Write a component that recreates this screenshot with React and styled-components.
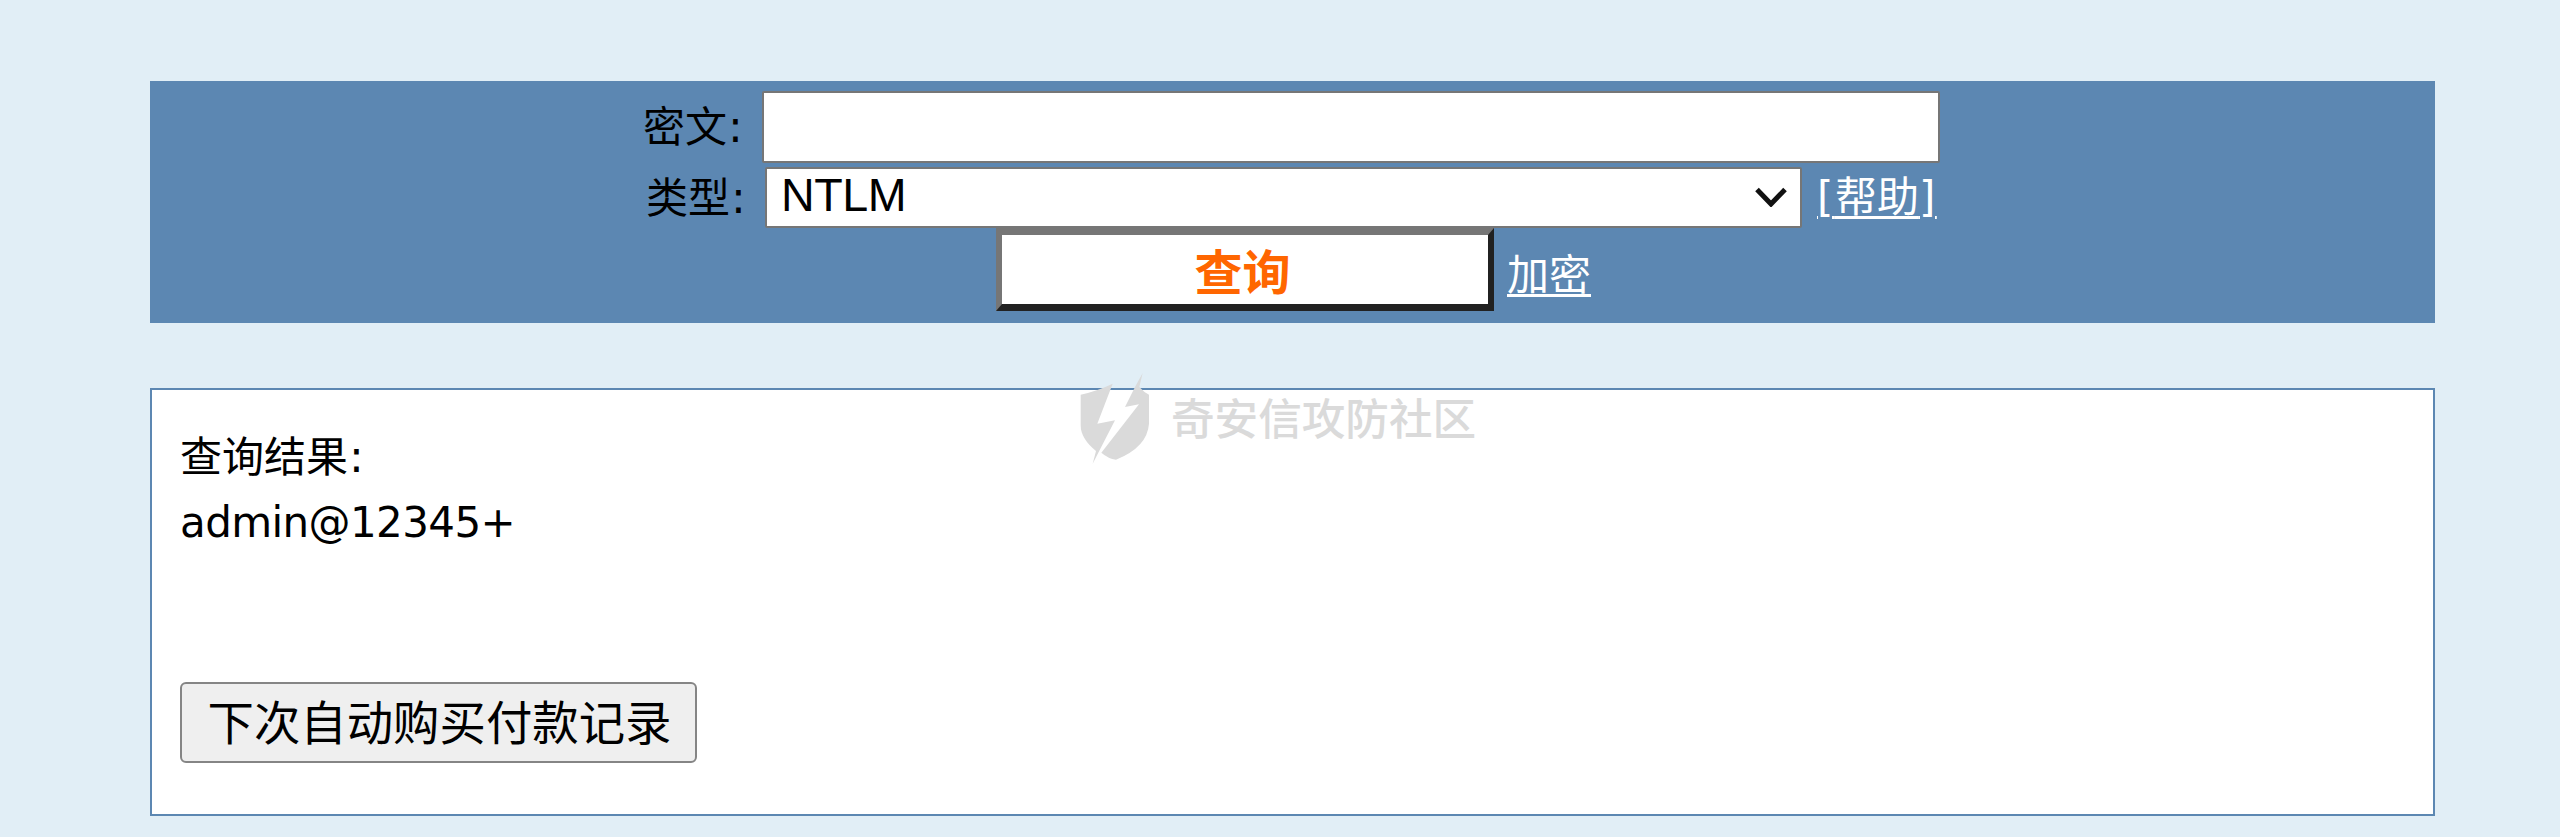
import React from 'react';
import styled, { createGlobalStyle } from 'styled-components';

const GlobalStyle = createGlobalStyle`
  * { box-sizing: border-box; }
  body {
    margin: 0;
    background: #e1eef6;
    color: #000;
    font-family: "DejaVu Sans", "Noto Sans CJK SC", sans-serif;
    font-size: 42px;
  }
`;

const Page = styled.main`
  width: 2560px;
  height: 837px;
  padding: 81px 125px 0 150px;
  display: flex;
  flex-direction: column;
  gap: 65px;
  overflow: hidden;
`;

const QueryForm = styled.form`
  height: 242px;
  padding-top: 10px;
  background: #5c87b2;
  display: flex;
  flex-direction: column;
  align-items: flex-start;
`;

const FormRow = styled.div`
  display: flex;
  align-items: flex-start;
  height: ${(p) => p.$height}px;
  padding-left: ${(p) => p.$indent}px;
`;

const Label = styled.label`
  width: 119px;
  padding-top: ${(p) => p.$drop}px;
  line-height: 50px;
  font-family: "Noto Sans CJK SC", sans-serif;
  white-space: nowrap;
`;

const Colon = styled.span`
  font-family: "DejaVu Sans", sans-serif;
  font-size: 44px;
  line-height: 1;
  margin-left: 1px;
`;

const CipherInput = styled.input`
  width: 1178px;
  height: 72px;
  padding: 4px 8px;
  border: 2px solid #767676;
  border-radius: 2px;
  background: #fff;
  font: 47px "Liberation Sans", sans-serif;
`;

const SelectBox = styled.div`
  display: grid;
  width: 1037px;
  height: 61px;
  align-items: center;
  justify-items: end;
`;

const TypeSelect = styled.select`
  grid-area: 1 / 1;
  appearance: none;
  width: 100%;
  height: 61px;
  padding: 0 14px 5px;
  border: 2px solid #767676;
  border-radius: 2px;
  background: #fff;
  color: #000;
  font: 46.67px "Liberation Sans", sans-serif;
  letter-spacing: -0.5px;
`;

const Chevron = styled.svg`
  grid-area: 1 / 1;
  width: 32px;
  height: 20px;
  margin-right: 15px;
  margin-bottom: 2px;
  pointer-events: none;
`;

const TextLink = styled.a`
  color: #fff;
  font-family: "Noto Sans CJK SC", sans-serif;
  line-height: 50px;
  text-decoration: underline;
  text-decoration-thickness: 3px;
  text-underline-offset: ${(p) => p.$underline}px;
  margin-left: ${(p) => p.$gap}px;
  padding-top: ${(p) => p.$drop}px;
  white-space: nowrap;
`;

const Bracket = styled.span`
  font-family: "DejaVu Sans", sans-serif;
  letter-spacing: 1.5px;
  line-height: 1;
`;

const SubmitButton = styled.button`
  width: 498px;
  height: 83px;
  padding: 0 5px 2px 0;
  border: 7px solid;
  border-color: #767676 #212121 #212121 #767676;
  border-width: 7px 6px 7px 6px;
  background: #fff;
  color: #ff6600;
  font: bold 48px "Noto Sans CJK SC", sans-serif;
  line-height: 56px;
`;

const ResultPanel = styled.section`
  position: relative;
  height: 428px;
  padding: 31px 28px;
  border: 2px solid #5c87b2;
  background: #fff;
  display: flex;
  flex-direction: column;
  align-items: flex-start;
`;

const ResultLine = styled.div`
  line-height: 66px;
  height: ${(p) => (p.$latin ? 66 : 69)}px;
  white-space: nowrap;
  font-family: ${(p) => (p.$latin ? '"DejaVu Sans"' : '"Noto Sans CJK SC"')}, sans-serif;
  letter-spacing: ${(p) => (p.$latin ? '-0.6px' : 'normal')};
`;

const RecordButton = styled.button`
  margin-top: 126px;
  width: 517px;
  height: 81px;
  padding: 0 0 5px 2px;
  border: 2px solid #858585;
  border-radius: 6px;
  background: #efefef;
  color: #000;
  font: 46.4px "Noto Sans CJK SC", sans-serif;
  line-height: 66px;
  white-space: nowrap;
`;

const Watermark = styled.div`
  position: absolute;
  left: 928px;
  top: -17px;
  display: flex;
  align-items: flex-start;
  gap: 21px;
  color: #dadada;
  font: 500 43.6px "Noto Sans CJK SC", sans-serif;
  line-height: 60px;
  pointer-events: none;
`;

const WatermarkText = styled.span`
  padding-top: 13px;
`;

export default function App() {
  return (
    <>
      <GlobalStyle />
      <Page>
        <QueryForm onSubmit={(e) => e.preventDefault()}>
          <FormRow $height={76} $indent={493}>
            <Label $drop={8}>密文<Colon>:</Colon></Label>
            <CipherInput />
          </FormRow>
          <FormRow $height={61} $indent={496}>
            <Label $drop={3}>类型<Colon>:</Colon></Label>
            <SelectBox>
              <TypeSelect defaultValue="NTLM">
                <option>NTLM</option>
              </TypeSelect>
              <Chevron viewBox="0 0 32 20">
                <path d="M2 2.5 16 17 30 2.5" fill="none" stroke="#111" strokeWidth="5" />
              </Chevron>
            </SelectBox>
            <TextLink href="#" $gap={15} $drop={2} $underline={4}>
              <Bracket>[</Bracket>帮助<Bracket>]</Bracket>
            </TextLink>
          </FormRow>
          <FormRow $height={83} $indent={846}>
            <SubmitButton>查询</SubmitButton>
            <TextLink href="#" $gap={13} $drop={19} $underline={4}>加密</TextLink>
          </FormRow>
        </QueryForm>
        <ResultPanel>
          <ResultLine>查询结果<Colon>:</Colon></ResultLine>
          <ResultLine $latin>admin@12345+</ResultLine>
          <RecordButton>下次自动购买付款记录</RecordButton>
          <Watermark>
            <svg width="70" height="92" viewBox="60 8 210 276" fill="#dadada">
              <path d="M62 73Q112 62 158 40L112 160 165 150 98 280 108 242Q62 205 62 165Z" />
              <path d="M248 8 238 50Q252 66 267 73V160Q262 230 168 268 145 265 124 247L237 102 195 110 225 50Z" />
            </svg>
            <WatermarkText>奇安信攻防社区</WatermarkText>
          </Watermark>
        </ResultPanel>
      </Page>
    </>
  );
}
